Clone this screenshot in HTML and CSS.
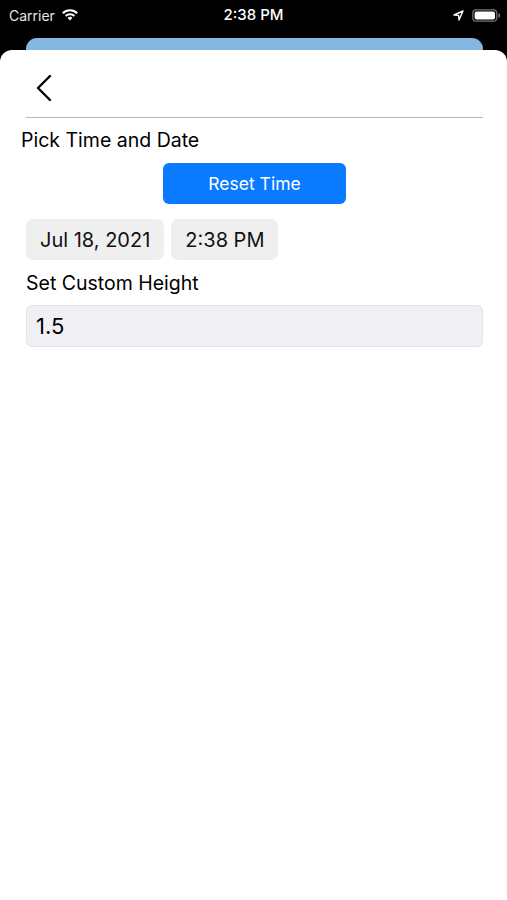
FILE: index.html
```html
<!DOCTYPE html>
<html lang="en">
<head>
    <meta charset="UTF-8">
    <meta name="viewport" content="width=device-width, initial-scale=1.0">
    <title>Pick Time and Date</title>
    <link rel="stylesheet" href="styles.css">
</head>
<body>

    <div class="status-bar">
        <div class="status-left">
            <span class="carrier">Carrier</span>
            <svg class="wifi" width="18" height="13" viewBox="0 0 18 13">
                <path d="M9 12.6 L6.6 10 A3.4 3.4 0 0 1 11.4 10 Z" fill="#fff"/>
                <path d="M3.9 7.3 A7.2 7.2 0 0 1 14.1 7.3 L12.6 8.8 A5.1 5.1 0 0 0 5.4 8.8 Z" fill="#fff"/>
                <path d="M1.1 4.5 A11.2 11.2 0 0 1 16.9 4.5 L15.4 6 A9.1 9.1 0 0 0 2.6 6 Z" fill="#fff"/>
            </svg>
        </div>
        <div class="status-time">2:38 PM</div>
        <div class="status-right">
            <svg class="location" width="11" height="11" viewBox="0 0 11 11">
                <path d="M10 1 L1 5 L5.6 5.4 L6 10 Z" fill="none" stroke="#fff" stroke-width="1.4" stroke-linejoin="round"/>
            </svg>
            <svg class="battery" width="28" height="13" viewBox="0 0 28 13">
                <rect x="0.8" y="0.8" width="24" height="11.4" rx="3.5" fill="none" stroke="#777" stroke-width="1.2"/>
                <rect x="2.6" y="2.6" width="20.4" height="7.8" rx="2" fill="#fff"/>
                <path d="M26.4 4.5 A2 2 0 0 1 26.4 8.5 Z" fill="#777"/>
            </svg>
        </div>
    </div>

    <div class="backdrop">
        <div class="parent-card"></div>
        <div class="sheet">
            <div class="nav">
                <button class="back" type="button" aria-label="Back">
                    <svg width="18" height="28" viewBox="0 0 18 28">
                        <path d="M15 2 L3 14 L15 26" fill="none" stroke="#000" stroke-width="2.4" stroke-linecap="round" stroke-linejoin="round"/>
                    </svg>
                </button>
            </div>
            <div class="divider"></div>

            <h2 class="title">Pick Time and Date</h2>
            <div class="actions">
                <button class="reset" type="button">Reset Time</button>
            </div>

            <div class="pickers">
                <span class="pill">Jul 18, 2021</span>
                <span class="pill">2:38 PM</span>
            </div>

            <label class="field-label" for="height">Set Custom Height</label>
            <input class="field" type="text" id="height" value="1.5">
        </div>
    </div>

</body>
</html>
```

FILE: styles.css
```css
/* page */
body {
    margin: 0;
    background: #000;
    font-family: "Inter", "Liberation Sans", sans-serif;
    color: #000;
}

/* status bar */
.status-bar {
    height: 38px;
    display: flex;
    align-items: center;
    justify-content: space-between;
    padding: 0 7px 8px 9px;
    box-sizing: border-box;
    color: #fff;
    position: relative;
}

.status-left {
    display: flex;
    align-items: center;
    gap: 6px;
}

.carrier {
    font-size: 14px;
    color: #e6e6e6;
}

.wifi {
    margin-top: -2px;
}

.status-time {
    position: absolute;
    left: 0;
    right: 0;
    top: 5px;
    text-align: center;
    font-size: 15px;
    font-weight: 500;
}

.status-right {
    display: flex;
    align-items: center;
    gap: 8px;
}

/* stacked sheets */
.backdrop {
    background: #000;
}

.parent-card {
    height: 12px;
    margin: 0 24px 0 26px;
    background: #85b7e0;
    border-radius: 11px 11px 0 0;
}

.sheet {
    background: #fff;
    border-radius: 12px 12px 0 0;
    min-height: 850px;
    padding: 0 24px 0 26px;
}

.nav {
    height: 67px;
    display: flex;
    align-items: center;
}

.back {
    background: none;
    border: none;
    padding: 0;
    margin: 9px 0 0 9px;
    cursor: pointer;
    display: flex;
}

.divider {
    height: 1px;
    background: #b8b8bc;
}

/* content */
.title {
    margin: 11px 0 0 -5px;
    font-size: 19.5px;
    font-weight: 400;
    line-height: 23px;
}

.actions {
    display: flex;
    justify-content: center;
    margin-top: 11px;
}

.reset {
    width: 183px;
    height: 41px;
    background: #0a7aff;
    color: #fff;
    border: none;
    border-radius: 6px;
    font-family: inherit;
    font-size: 17.5px;
}

.pickers {
    display: flex;
    gap: 7px;
    margin-top: 15px;
}

.pill {
    height: 41px;
    padding: 0 14px;
    display: flex;
    align-items: center;
    background: #efeff0;
    border-radius: 7px;
    font-size: 20px;
    color: #111;
}

.field-label {
    display: block;
    margin-top: 12px;
    font-size: 19.5px;
    line-height: 23px;
}

.field {
    display: block;
    width: 100%;
    height: 42px;
    margin-top: 10px;
    box-sizing: border-box;
    padding: 0 9px;
    background: #f0f0f4;
    border: 1px solid #e4e4e8;
    border-radius: 6px;
    font-family: inherit;
    font-size: 22px;
    color: #000;
    outline: none;
}
```
